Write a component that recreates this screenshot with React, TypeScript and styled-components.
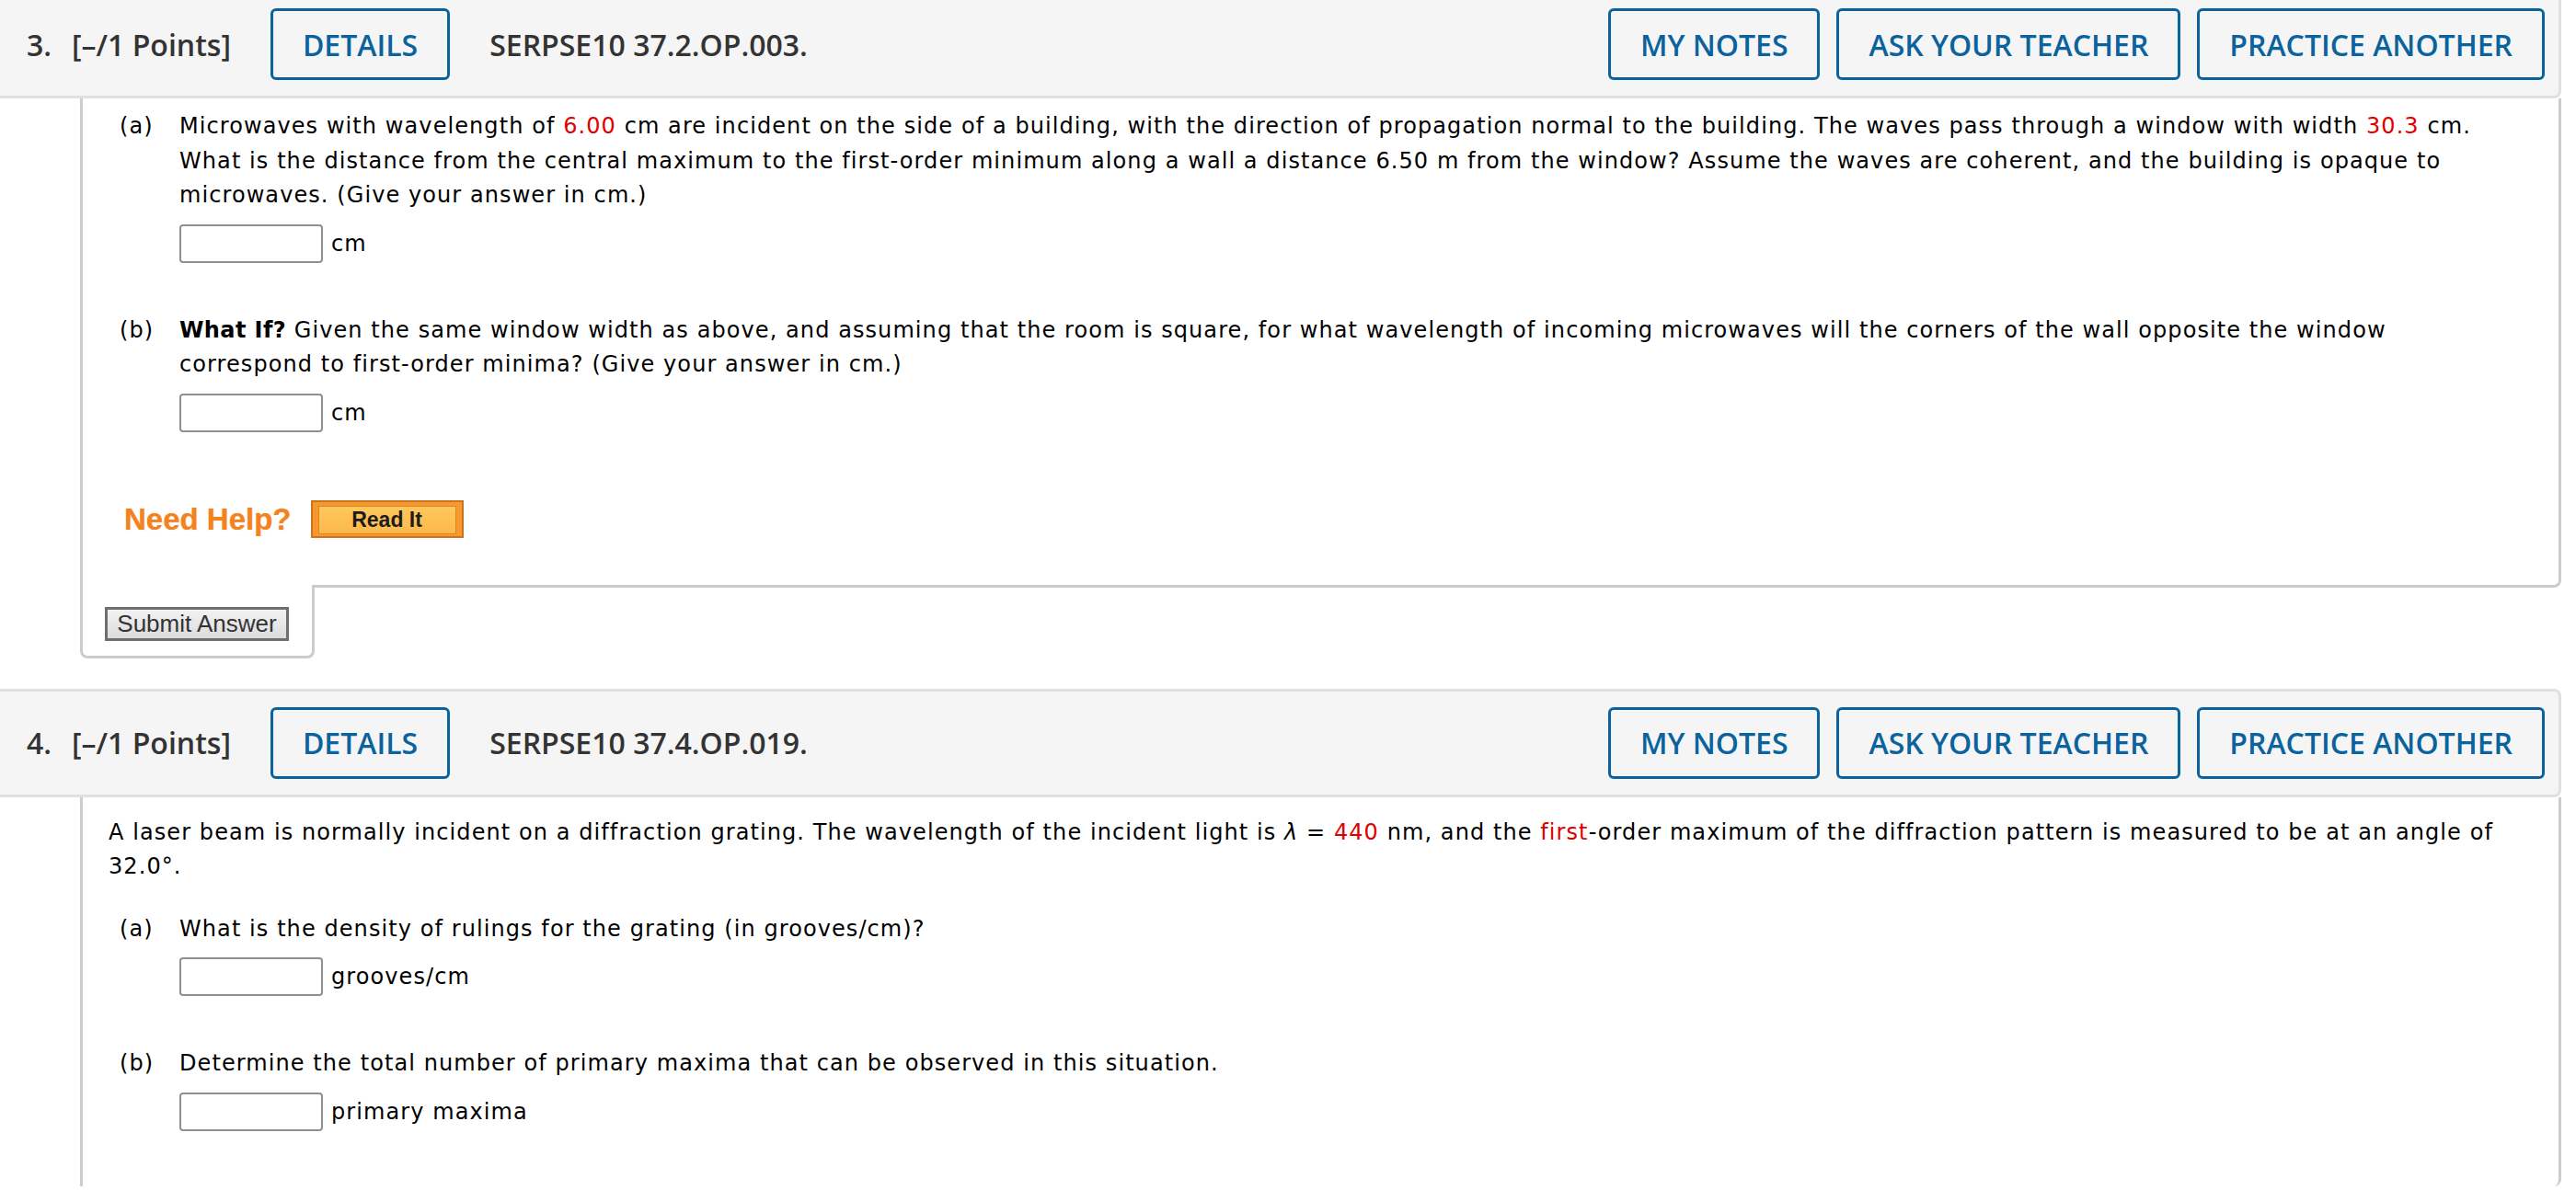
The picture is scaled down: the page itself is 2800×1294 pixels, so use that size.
import React from 'react';
import styled, { createGlobalStyle } from 'styled-components';

const GlobalStyle = createGlobalStyle`
  html, body {
    margin: 0;
    padding: 0;
    background: #fff;
    overflow: hidden;
  }
  body {
    font-family: "DejaVu Sans", Verdana, sans-serif;
    color: #000;
  }
`;

const Page = styled.div`
  width: 2784px;
  margin-top: -11px;
`;

const Question = styled.section`
  margin-bottom: 33px;
`;

const Header = styled.div`
  display: flex;
  align-items: center;
  height: 112px;
  padding: 0 15px 0 29px;
  background: #f5f5f5;
  border: 3px solid #e0e0e0;
  border-left: none;
  border-radius: 0 8px 8px 0;
  font-family: "Open Sans", sans-serif;
  font-weight: 600;
  font-size: 32px;
  color: #333;
`;

const Number = styled.span``;

const Points = styled.span`
  margin-left: 22px;
`;

const ItemCode = styled.span``;

const OutlineButton = styled.button`
  height: 78px;
  padding: 0 32px;
  background: transparent;
  border: 3px solid #0a639c;
  border-radius: 6px;
  font-family: "Open Sans", sans-serif;
  font-weight: 600;
  font-size: 32px;
  color: #0a639c;
  cursor: pointer;
`;

const DetailsButton = styled(OutlineButton)`
  margin: 0 43px;
`;

const HeaderActions = styled.div`
  display: flex;
  gap: 18px;
  margin-left: auto;
`;

const Body = styled.div<{ $padLeft: number; $padTop: number; $open?: boolean }>`
  margin-left: 87px;
  padding: ${p => p.$padTop}px 40px ${p => (p.$open ? 60 : 51)}px ${p => p.$padLeft}px;
  border: 3px solid #ccc;
  border-top: none;
  border-bottom: ${p => (p.$open ? 'none' : '3px solid #ccc')};
  border-radius: 0 0 8px 0;
  font-size: 24px;
  letter-spacing: 1.08px;
  line-height: 37.5px;
`;

const Intro = styled.div`
  margin-bottom: 30px;
`;

const Part = styled.div<{ $indent?: number }>`
  display: grid;
  grid-template-columns: 65px 1fr;
  margin-left: ${p => p.$indent || 0}px;
  & + & {
    margin-top: 55px;
  }
`;

const PartLabel = styled.span``;

const PartText = styled.div``;

const Red = styled.span`
  color: #e00000;
`;

const Strong = styled.b`
  font-weight: 700;
  letter-spacing: 0.4px;
`;

const Lambda = styled.i`
  font-style: italic;
`;

const AnswerRow = styled.div`
  display: flex;
  align-items: center;
  gap: 9px;
  margin-top: 12px;
`;

const AnswerInput = styled.input`
  box-sizing: border-box;
  width: 156px;
  height: 42px;
  border: 2px solid #8f8f8f;
  border-radius: 4px;
  background: #fff;
`;

const Unit = styled.span`
  line-height: 42px;
`;

const HelpRow = styled.div`
  display: flex;
  align-items: center;
  gap: 21px;
  margin: 74px 0 0 5px;
`;

const NeedHelp = styled.span`
  font-family: "Liberation Sans", Arial, sans-serif;
  font-weight: 700;
  font-size: 33px;
  letter-spacing: 0;
  line-height: 41px;
  color: #f4821f;
  text-shadow: 0 0 1px rgba(244, 130, 31, 0.6);
`;

const ReadIt = styled.button`
  box-sizing: border-box;
  width: 166px;
  height: 41px;
  padding: 4px 6px;
  background: #f8982d;
  border: 2px solid #c97520;
  cursor: pointer;
`;

const ReadItFace = styled.span`
  display: flex;
  align-items: center;
  justify-content: center;
  height: 100%;
  background: linear-gradient(#ffc85c, #fdb84a);
  border: 1px solid #d8862a;
  font-family: "Liberation Sans", Arial, sans-serif;
  font-weight: 700;
  font-size: 23px;
  color: #1c1c1c;
`;

const SubmitTab = styled.div`
  box-sizing: border-box;
  width: 255px;
  margin: -3px 0 0 87px;
  padding: 24px 0 16px 24px;
  background: #fff;
  border: 3px solid #ccc;
  border-top: none;
  border-radius: 0 0 8px 8px;
`;

const SubmitButton = styled.button`
  box-sizing: border-box;
  width: 200px;
  height: 37px;
  padding: 0;
  background: linear-gradient(#f2f2f2, #dcdcdc);
  border: 3px solid #6f6f6f;
  font-family: "Liberation Sans", Arial, sans-serif;
  font-size: 26px;
  color: #333;
  cursor: pointer;
`;

type HeadProps = { num: string; code: string };

const QuestionHeader = ({ num, code }: HeadProps) => (
  <Header>
    <Number>{num}</Number>
    <Points>[–/1 Points]</Points>
    <DetailsButton>DETAILS</DetailsButton>
    <ItemCode>{code}</ItemCode>
    <HeaderActions>
      <OutlineButton>MY NOTES</OutlineButton>
      <OutlineButton>ASK YOUR TEACHER</OutlineButton>
      <OutlineButton>PRACTICE ANOTHER</OutlineButton>
    </HeaderActions>
  </Header>
);

const Answer = ({ unit }: { unit: string }) => (
  <AnswerRow>
    <AnswerInput type="text" />
    <Unit>{unit}</Unit>
  </AnswerRow>
);

const App = () => {
  return (
    <Page>
      <GlobalStyle />
      <Question>
        <QuestionHeader num="3." code="SERPSE10 37.2.OP.003." />
        <Body $padLeft={40} $padTop={12}>
          <Part>
            <PartLabel>(a)</PartLabel>
            <div>
              <PartText>
                Microwaves with wavelength of <Red>6.00</Red> cm are incident on the side of a building, with the
                direction of propagation normal to the building. The waves pass through a window with width{' '}
                <Red>30.3</Red> cm. What is the distance from the central maximum to the first-order minimum along a
                wall a distance 6.50 m from the window? Assume the waves are coherent, and the building is opaque to
                microwaves. (Give your answer in cm.)
              </PartText>
              <Answer unit="cm" />
            </div>
          </Part>
          <Part>
            <PartLabel>(b)</PartLabel>
            <div>
              <PartText>
                <Strong>What If?</Strong> Given the same window width as above, and assuming that the room is square,
                for what wavelength of incoming microwaves will the corners of the wall opposite the window correspond
                to first-order minima? (Give your answer in cm.)
              </PartText>
              <Answer unit="cm" />
            </div>
          </Part>
          <HelpRow>
            <NeedHelp>Need Help?</NeedHelp>
            <ReadIt>
              <ReadItFace>Read It</ReadItFace>
            </ReadIt>
          </HelpRow>
        </Body>
        <SubmitTab>
          <SubmitButton>Submit Answer</SubmitButton>
        </SubmitTab>
      </Question>

      <Question>
        <QuestionHeader num="4." code="SERPSE10 37.4.OP.019." />
        <Body $padLeft={28} $padTop={20} $open>
          <Intro>
            A laser beam is normally incident on a diffraction grating. The wavelength of the incident light is{' '}
            <Lambda>λ</Lambda> = <Red>440</Red> nm, and the <Red>first</Red>-order maximum of the diffraction pattern
            is measured to be at an angle of 32.0°.
          </Intro>
          <Part $indent={12}>
            <PartLabel>(a)</PartLabel>
            <div>
              <PartText>What is the density of rulings for the grating (in grooves/cm)?</PartText>
              <Answer unit="grooves/cm" />
            </div>
          </Part>
          <Part $indent={12}>
            <PartLabel>(b)</PartLabel>
            <div>
              <PartText>Determine the total number of primary maxima that can be observed in this situation.</PartText>
              <Answer unit="primary maxima" />
            </div>
          </Part>
        </Body>
      </Question>
    </Page>
  );
};

export default App;
